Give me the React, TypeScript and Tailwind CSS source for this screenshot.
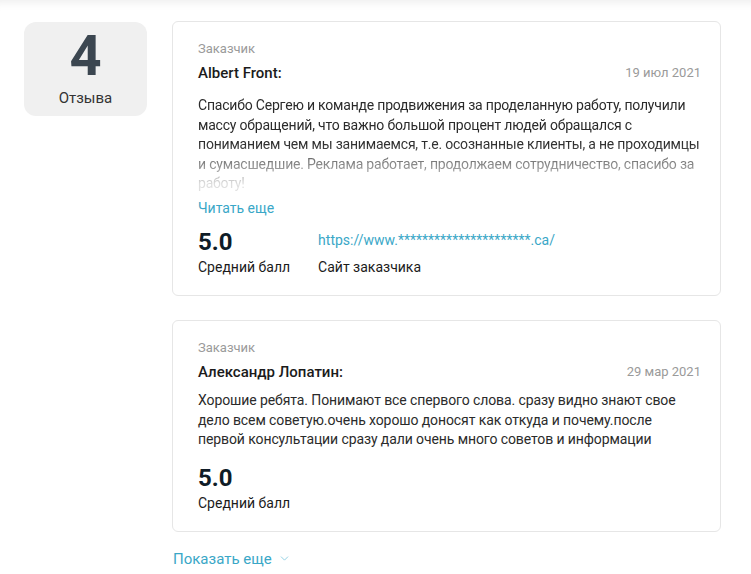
import { ChevronDown } from "lucide-react";

type Review = {
  name: string;
  date: string;
  lines: string[];
  clamp?: boolean;
  site?: string;
};

const reviews: Review[] = [
  {
    name: "Albert Front:",
    date: "19 июл 2021",
    lines: [
      "Спасибо Сергею и команде продвижения за проделанную работу, получили",
      "массу обращений, что важно большой процент людей обращался с",
      "пониманием чем мы занимаемся, т.е. осознанные клиенты, а не проходимцы",
      "и сумасшедшие. Реклама работает, продолжаем сотрудничество, спасибо за",
      "работу!",
    ],
    clamp: true,
    site: "https://www.**********************.ca/",
  },
  {
    name: "Александр Лопатин:",
    date: "29 мар 2021",
    lines: [
      "Хорошие ребята. Понимают все спервого слова. сразу видно знают свое",
      "дело всем советую.очень хорошо доносят как откуда и почему.после",
      "первой консультации сразу дали очень много советов и информации",
    ],
  },
];

function ReviewCard({ review }: { review: Review }) {
  const body = review.lines.map((l, i) => (
    <span key={i} className="block whitespace-nowrap">
      {l}
    </span>
  ));
  return (
    <div className="rounded-md border border-[#e6e6e6] bg-white pl-[25px] pr-[19px] pt-[17px] pb-[18px]">
      <div className="text-[13px] leading-[20px] text-[#9a9a9a]">Заказчик</div>
      <div className="mt-[4px] flex items-center justify-between">
        <span className="text-[15px] leading-[20px] font-medium text-[#1b1b1b]">{review.name}</span>
        <span className="text-[13px] leading-[20px] text-[#9a9a9a]">{review.date}</span>
      </div>
      {review.clamp ? (
        <>
          <p className="-mr-[8px] mt-[13px] h-[98px] overflow-hidden text-[14px] leading-[19.5px] tracking-[-0.2px] text-[#2b2b2b] [mask-image:linear-gradient(to_bottom,black_48%,rgba(0,0,0,0.15)_90%)]">
            {body}
          </p>
          <div className="mt-[4px] text-[14px] leading-[20px] text-[#3aa7c7]">Читать еще</div>
          <Rating site={review.site} gap="mt-[10px]" />
        </>
      ) : (
        <>
          <p className="mt-[9px] text-[14px] leading-[19.5px] tracking-[-0.1px] text-[#2b2b2b]">{body}</p>
          <Rating gap="mt-[14px]" />
        </>
      )}
    </div>
  );
}

function Rating({ site, gap }: { site?: string; gap: string }) {
  return (
    <div className={`${gap} flex gap-[28px]`}>
      <div>
        <div className="text-[24px] leading-[28px] font-bold text-[#0f1c27]">5.0</div>
        <div className="mt-[1px] text-[14px] leading-[20px] text-[#1b1b1b]">Средний балл</div>
      </div>
      {site && (
        <div>
          <div className="text-[14px] leading-[24px] text-[#3aa7c7]">{site}</div>
          <div className="mt-[5px] text-[14px] leading-[20px] text-[#1b1b1b]">Сайт заказчика</div>
        </div>
      )}
    </div>
  );
}

export default function App() {
  return (
    <div className="min-h-[574px] w-[751px] bg-white font-['Roboto',sans-serif] shadow-[inset_0_10px_10px_-8px_rgba(0,0,0,0.08)]">
      <div className="flex items-start gap-[25px] pl-[24px] pt-[21px]">
        <div className="mt-[1px] flex h-[94px] w-[123px] flex-col items-center justify-center rounded-xl bg-[#f0f0f0]">
          <div className="text-[56px] leading-[52px] font-bold text-[#3b4650]">4</div>
          <div className="mt-[6px] text-[15px] leading-[20px] text-[#333]">Отзыва</div>
        </div>
        <div className="flex w-[549px] flex-col gap-[24px]">
          {reviews.map((r) => (
            <ReviewCard key={r.name} review={r} />
          ))}
          <button type="button" className="-mt-[7px] flex items-center gap-[6px] pl-[1px] text-[15px] leading-[20px] text-[#3aa7c7]">
            Показать еще
            <ChevronDown size={13} strokeWidth={1.5} className="text-[#7cc6dc]" />
          </button>
        </div>
      </div>
    </div>
  );
}
